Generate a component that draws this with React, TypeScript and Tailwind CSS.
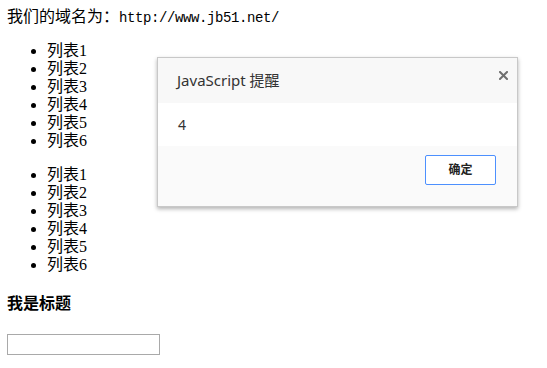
export default function App() {
  const items = ["列表1", "列表2", "列表3", "列表4", "列表5", "列表6"];
  return (
    <div
      className="relative w-[547px] h-[368px] bg-white text-black pt-2 pl-[7px] text-[16px] leading-[18px]"
      style={{ fontFamily: '"Liberation Serif", "Noto Sans CJK SC", serif' }}
    >
      <div className="h-[18px] whitespace-nowrap">
        我们的域名为：
        <span className="text-[14px] tracking-[-0.4px]" style={{ fontFamily: '"Liberation Mono", monospace' }}>
          http://www.jb51.net/
        </span>
      </div>
      <ul className="list-disc pl-10 my-4">
        {items.map((t) => (
          <li key={"a" + t} className="h-[18px]">{t}</li>
        ))}
      </ul>
      <ul className="list-disc pl-10 my-4">
        {items.map((t) => (
          <li key={"b" + t} className="h-[18px]">{t}</li>
        ))}
      </ul>
      <h4 className="font-bold text-[16px] leading-[18px] my-[21px]">我是标题</h4>
      <input type="text" className="block w-[153px] h-[21px] border border-[#a9a9a9] bg-white outline-none" />

      <div
        className="absolute left-[157px] top-[57px] w-[361px] h-[150px] flex flex-col border border-[#c8c8c8] bg-white shadow-[0_2px_4px_rgba(0,0,0,0.3)]"
        style={{ fontFamily: '"Noto Sans", "Noto Sans CJK SC", sans-serif' }}
      >
        <div className="relative h-[45px] bg-[#f8f8f8] flex items-center pl-[19px] text-[15px] text-[#333]">
          <span className="mt-[-2px]">JavaScript 提醒</span>
          <svg className="absolute right-[9px] top-[13px]" width="9" height="9" viewBox="0 0 9 9">
            <path d="M1 1 L8 8 M8 1 L1 8" stroke="#707070" strokeWidth="2" strokeLinecap="square" />
          </svg>
        </div>
        <div className="h-[43px] bg-white flex items-center pl-[20px] text-[14px] text-[#333]">4</div>
        <div className="flex-1 bg-[#fafafa] flex justify-end items-start pt-[9px] pr-[21px]">
          <button className="w-[71px] h-[30px] border border-[#4d90fe] rounded-[2px] bg-white text-[12px] font-bold text-[#222] flex items-center justify-center">
            确定
          </button>
        </div>
      </div>
    </div>
  );
}
